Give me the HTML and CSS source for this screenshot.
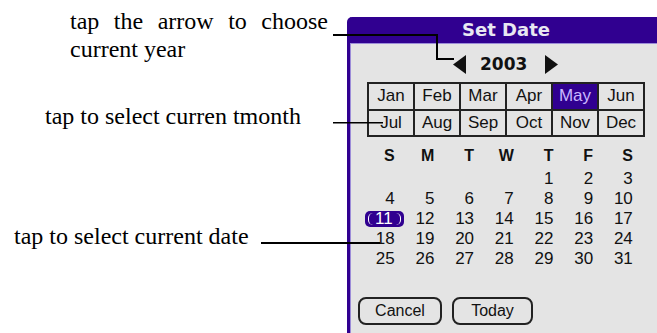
FILE: index.html
```html
<!DOCTYPE html>
<html lang="en">
<head>
    <meta charset="UTF-8">
    <meta name="viewport" content="width=device-width, initial-scale=1.0">
    <title>Set Date</title>
    <link rel="stylesheet" href="styles.css">
</head>
<body>
    <div class="page">
        <div class="notes">
            <p class="note note-year">tap the arrow to choose current year</p>
            <p class="note note-month">tap to select curren tmonth</p>
            <p class="note note-date">tap to select current date</p>
        </div>

        <div class="dialog">
            <div class="title">Set Date</div>
            <div class="content">
                <div class="year">
                    <svg class="arrow" width="13" height="19" viewBox="0 0 13 19"><polygon points="13,0 13,19 0,9.5" /></svg>
                    <span class="year-num">2003</span>
                    <svg class="arrow" width="13" height="19" viewBox="0 0 13 19"><polygon points="0,0 0,19 13,9.5" /></svg>
                </div>

                <div class="months">
                    <div class="month">Jan</div>
                    <div class="month">Feb</div>
                    <div class="month">Mar</div>
                    <div class="month">Apr</div>
                    <div class="month current">May</div>
                    <div class="month">Jun</div>
                    <div class="month">Jul</div>
                    <div class="month">Aug</div>
                    <div class="month">Sep</div>
                    <div class="month">Oct</div>
                    <div class="month">Nov</div>
                    <div class="month">Dec</div>
                </div>

                <div class="days">
                    <div class="dow">S</div>
                    <div class="dow">M</div>
                    <div class="dow">T</div>
                    <div class="dow">W</div>
                    <div class="dow">T</div>
                    <div class="dow">F</div>
                    <div class="dow">S</div>

                    <div class="day"></div>
                    <div class="day"></div>
                    <div class="day"></div>
                    <div class="day"></div>
                    <div class="day">1</div>
                    <div class="day">2</div>
                    <div class="day">3</div>

                    <div class="day">4</div>
                    <div class="day">5</div>
                    <div class="day">6</div>
                    <div class="day">7</div>
                    <div class="day">8</div>
                    <div class="day">9</div>
                    <div class="day">10</div>

                    <div class="day"><span class="selected">11</span></div>
                    <div class="day">12</div>
                    <div class="day">13</div>
                    <div class="day">14</div>
                    <div class="day">15</div>
                    <div class="day">16</div>
                    <div class="day">17</div>

                    <div class="day">18</div>
                    <div class="day">19</div>
                    <div class="day">20</div>
                    <div class="day">21</div>
                    <div class="day">22</div>
                    <div class="day">23</div>
                    <div class="day">24</div>

                    <div class="day">25</div>
                    <div class="day">26</div>
                    <div class="day">27</div>
                    <div class="day">28</div>
                    <div class="day">29</div>
                    <div class="day">30</div>
                    <div class="day">31</div>
                </div>

                <div class="buttons">
                    <button class="btn btn-cancel">Cancel</button>
                    <button class="btn btn-today">Today</button>
                </div>
            </div>
        </div>

        <!-- leader lines from the notes to the dialog -->
        <svg class="leaders" width="657" height="333" viewBox="0 0 657 333">
            <path d="M333 35 H437 V59 H454" />
            <path d="M333 122.75 H383" class="thin" />
            <path d="M261 243 H380" />
        </svg>
    </div>
</body>
</html>
```

FILE: styles.css
```css
body {
    margin: 0;
    overflow: hidden;
    background: #fff;
}
.page {
    position: relative;
    display: flex;
    height: 333px;
}
.notes {
    width: 347px;
    flex-shrink: 0;
    font-family: 'Liberation Serif', serif;
    font-size: 24px;
    line-height: 28px;
    color: #000;
}
.note {
    margin: 0;
}
.note-year {
    width: 258px;
    margin: 7px 0 0 70px;
    text-align: justify;
}
.note-month {
    margin: 38.6px 0 0 45px;
}
.note-date {
    margin: 92px 0 0 14px;
}
.dialog {
    width: 312px;
    flex-shrink: 0;
    margin-top: 17px;
    border-left: 3px solid #300090;
    border-top-left-radius: 5px;
    background: #300090;
    font-family: 'Liberation Sans', sans-serif;
    color: #111;
}
.title {
    height: 26px;
    line-height: 26px;
    text-align: center;
    color: #e8e8f2;
    font-family: 'DejaVu Sans', sans-serif;
    font-weight: bold;
    font-size: 18px;
}
.content {
    height: 300px;
    background: #e4e4e4;
    border-top: 1px solid #9c8cd8;
    border-left: 1px solid #9c8cd8;
}
.year {
    display: flex;
    align-items: center;
    height: 22px;
    margin: 9px 0 0 102px;
}
.arrow {
    fill: #111;
}
.year-num {
    margin: 0 18px 0 14px;
    font-family: 'DejaVu Sans', sans-serif;
    font-weight: bold;
    font-size: 17px;
}
.months {
    display: grid;
    grid-template-columns: repeat(6, 1fr);
    grid-template-rows: repeat(2, 1fr);
    gap: 2px;
    width: 274px;
    height: 51px;
    margin: 7px 0 0 16px;
    padding: 2px;
    background: #222;
}
.month {
    display: flex;
    align-items: center;
    justify-content: center;
    background: #e4e4e4;
    font-size: 17px;
}
.month.current {
    background: #300090;
    color: #c8b8ff;
}
.days {
    display: grid;
    grid-template-columns: repeat(7, 39.7px);
    grid-template-rows: 23px repeat(5, 20px);
    margin: 8.5px 0 0 14px;
}
.dow,
.day {
    padding-right: 10px;
    line-height: 20px;
    text-align: right;
}
.dow {
    align-self: start;
    font-weight: bold;
    font-size: 16px;
}
.day {
    font-size: 17px;
}
.selected {
    position: relative;
    display: inline-block;
    margin-right: -8px;
    padding: 0 11px 0 10px;
    line-height: 16px;
    border-radius: 5px;
    background: #300090;
    color: #fff;
}
.selected::before {
    content: '';
    position: absolute;
    top: 2px;
    bottom: 2px;
    left: 3px;
    right: 3px;
    border-left: 1.5px solid #fff;
    border-right: 1.5px solid #fff;
    border-radius: 5px;
}
.buttons {
    display: flex;
    gap: 10px;
    margin: 28.5px 0 0 7px;
}
.btn {
    height: 28px;
    padding: 0;
    border: 2px solid #222;
    border-radius: 8px;
    background: transparent;
    color: #111;
    font-family: 'Liberation Sans', sans-serif;
    font-size: 16px;
}
.btn-cancel {
    width: 84px;
}
.btn-today {
    width: 81px;
}
.leaders {
    position: absolute;
    top: 0;
    left: 0;
    pointer-events: none;
}
.leaders path {
    fill: none;
    stroke: #000;
    stroke-width: 2;
}
.leaders path.thin {
    stroke-width: 1.5;
}
```
